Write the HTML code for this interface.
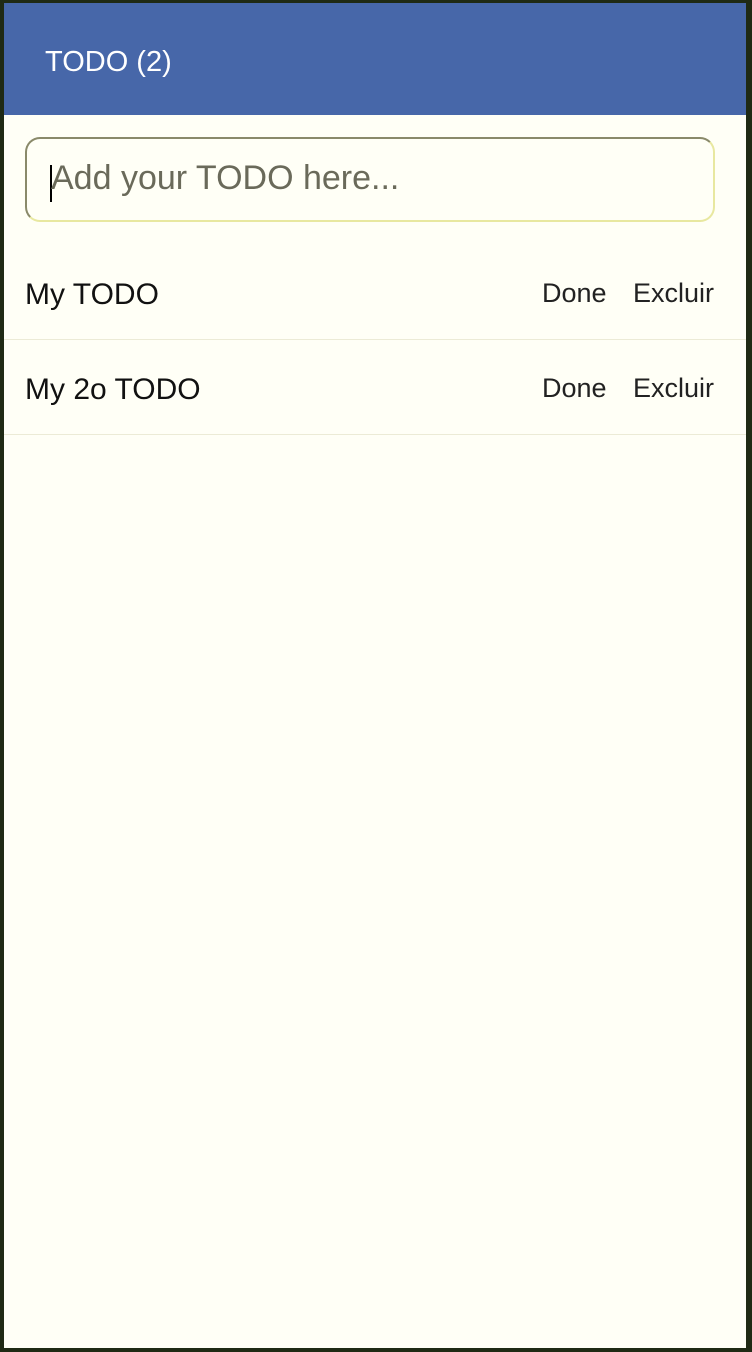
<!DOCTYPE html>
<html><head><style>
html,body{margin:0;padding:0;}
body{width:752px;height:1352px;background:#1f2a14;position:relative;overflow:hidden;font-family:"Liberation Sans",sans-serif;}
.page{position:absolute;left:4px;top:3px;width:742px;height:1345px;background:#fffff6;}
.hdr{position:absolute;left:0;top:0;width:742px;height:112px;background:#4767a9;}
.hdr span{position:absolute;left:41px;top:43px;color:#fff;font-size:29px;font-weight:300;}
.inp{position:absolute;left:21px;top:134px;width:686px;height:81px;border:2px solid #8a8a6a;border-right-color:#e8e8a0;border-bottom-color:#e8e8a0;border-radius:15px;}
.inp span{position:absolute;left:24px;top:20px;font-size:34px;color:#6a6a5a;}
.caret{position:absolute;left:23px;top:26px;width:2px;height:37px;background:#000;}
.row{position:absolute;left:0;width:742px;height:94px;border-bottom:1px solid #ecebd6;}
.row .t{position:absolute;left:21px;top:33px;font-size:30px;color:#111;}
.row .d{position:absolute;left:538px;top:33px;font-size:27px;color:#222;}
.row .e{position:absolute;left:629px;top:33px;font-size:27px;color:#222;}
</style></head><body>
<div class="page">
<div class="hdr"><span>TODO (2)</span></div>
<div class="inp"><div class="caret"></div><span>Add your TODO here...</span></div>
<div class="row" style="top:242px"><span class="t">My TODO</span><span class="d">Done</span><span class="e">Excluir</span></div>
<div class="row" style="top:337px"><span class="t">My 2o TODO</span><span class="d">Done</span><span class="e">Excluir</span></div>
</div>
</body></html>
